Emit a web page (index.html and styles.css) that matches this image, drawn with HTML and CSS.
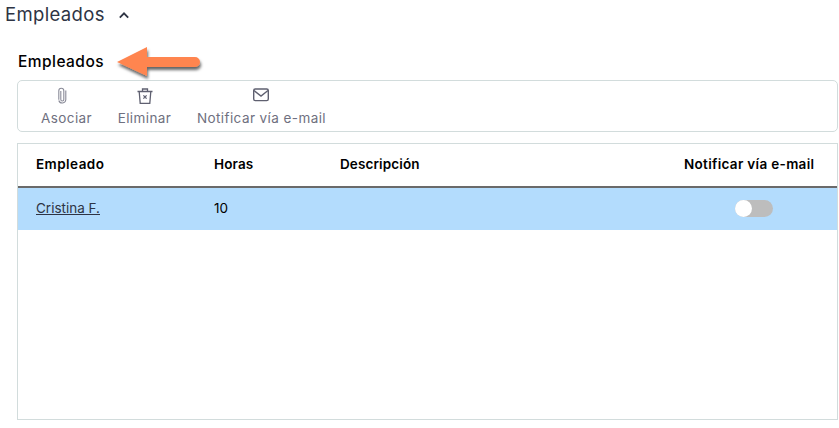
FILE: index.html
```html
<!DOCTYPE html>
<html lang="es">
<head>
<meta charset="utf-8">
<title>Empleados</title>
<link rel="stylesheet" href="styles.css">
</head>
<body>
<header class="section-head">
  <span class="section-title">Empleados</span>
  <svg class="chevron" width="12" height="8" viewBox="0 0 12 8"><path d="M1.800 6.700 6 2.300l4.200 4.400" fill="none" stroke="#2e3444" stroke-width="1.800"/></svg>
</header>
<main class="content">
  <div class="sub-head">
    <h2 class="sub-title">Empleados</h2>
    <svg class="arrow" width="105" height="50" viewBox="0 0 105 50">
      <defs><filter id="sh" x="-20%" y="-20%" width="140%" height="160%"><feDropShadow dx="1" dy="3" stdDeviation="1.800" flood-color="#000" flood-opacity=".6"/></filter></defs>
      <path d="M15 22 45 7V17H93a5 5 0 0 1 0 10H45V36Z" fill="#ff8550" filter="url(#sh)"/>
    </svg>
  </div>
  <div class="toolbar">
    <button class="tool">
      <svg width="18" height="18" viewBox="5 0 18 18" fill="none" stroke="#8a8b98" stroke-width="1.100"><path d="M7.800 5v8.500a1.500 1.500 0 0 0 3 0V4.800a2.500 2.500 0 0 0-5 0v9"/><path d="M12.800 4.500v9.200a3.600 3.600 0 0 1-7 .8"/></svg>
      <span>Asociar</span>
    </button>
    <button class="tool">
      <svg width="18" height="18" viewBox="0 0 18 18" fill="none" stroke="#5f6070" stroke-width="1.300"><path d="M1.500 5.500h15M6.500 5.500V3h5v2.500M3.200 5.500 4.200 17.400h9.600l1-11.900"/><path d="m7.400 9.400 3.200 3.200m0-3.200-3.200 3.200"/></svg>
      <span>Eliminar</span>
    </button>
    <button class="tool">
      <svg width="18" height="18" viewBox="0 0 18 18" fill="none" stroke="#5f6070" stroke-width="1.400"><rect x="1.700" y="3" width="14.600" height="11.600" rx="1.600"/><path d="m2 4.500 7 5.500 7-5.500"/></svg>
      <span>Notificar vía e-mail</span>
    </button>
  </div>
  <div class="table-box">
    <table class="grid">
      <thead>
        <tr>
          <th class="col-name">Empleado</th>
          <th class="col-hours">Horas</th>
          <th class="col-desc">Descripción</th>
          <th class="col-notify">Notificar vía e-mail</th>
        </tr>
      </thead>
      <tbody>
        <tr class="selected">
          <td class="col-name"><a href="#">Cristina F.</a></td>
          <td class="col-hours">10</td>
          <td class="col-desc"></td>
          <td class="col-notify"><span class="switch"><span class="knob"></span></span></td>
        </tr>
      </tbody>
    </table>
  </div>
</main>
</body>
</html>
```
FILE: styles.css
```css
* { box-sizing: border-box; }
html, body { margin: 0; padding: 0; }
body {
  width: 839px;
  height: 428px;
  overflow: hidden;
  background: #fff;
  font-family: Inter, "Liberation Sans", sans-serif;
  color: #000;
}
.section-head {
  display: flex;
  align-items: center;
  gap: 13px;
  height: 28px;
  padding-left: 5px;
}
.section-title { font-size: 18.5px; color: #2e3444; letter-spacing: .35px; }
.chevron { margin-top: 1px; }
.content { padding: 0 1px 0 17px; }
.sub-head {
  position: relative;
  height: 52px;
  padding: 24px 0 0 1px;
}
.sub-title { margin: 0; font-size: 15.5px; line-height: 20px; font-weight: 500; letter-spacing: .45px; }
.arrow { position: absolute; left: 85px; top: 12px; }
.toolbar {
  display: flex;
  height: 52px;
  border: 1px solid #d2dcdc;
  border-radius: 5px;
  padding-left: 20px;
  gap: 19.5px;
}
.tool {
  display: flex;
  flex-direction: column;
  align-items: center;
  border: 0;
  background: none;
  padding: 5px 3px 0;
  font: inherit;
  font-size: 13.5px;
  line-height: 16px;
  color: #6f7080;
  gap: 6px;
  letter-spacing: .42px;
}
.table-box {
  margin-top: 11px;
  height: 277px;
  border: 1px solid #d2dcdc;
}
.grid { width: 100%; border-collapse: collapse; table-layout: fixed; font-size: 13.5px; }
.grid th {
  height: 43px;
  text-align: left;
  font-weight: 600;
  border-bottom: 2px solid #6a6a6a;
  padding: 0 0 2px;
  letter-spacing: .12px;
}
.grid th.col-name { letter-spacing: .45px; }
.grid th.col-notify { letter-spacing: .32px; }
.grid td { height: 43px; padding: 0 0 2px; }
.col-name { width: 196px; padding-left: 18px !important; }
.col-hours { width: 126px; }
.col-notify { width: 153px; }
.selected { background: #b3dcfd; }
.selected a { color: #2e3444; }
.selected td.col-notify { text-align: center; padding-right: 14px; }
.switch {
  display: inline-block;
  position: relative;
  width: 38px;
  height: 17px;
  border-radius: 9px;
  background: #bdbdbd;
  vertical-align: middle;
}
.knob {
  position: absolute;
  left: 0;
  top: 0;
  width: 17px;
  height: 17px;
  border-radius: 50%;
  background: #fff;
}
```
